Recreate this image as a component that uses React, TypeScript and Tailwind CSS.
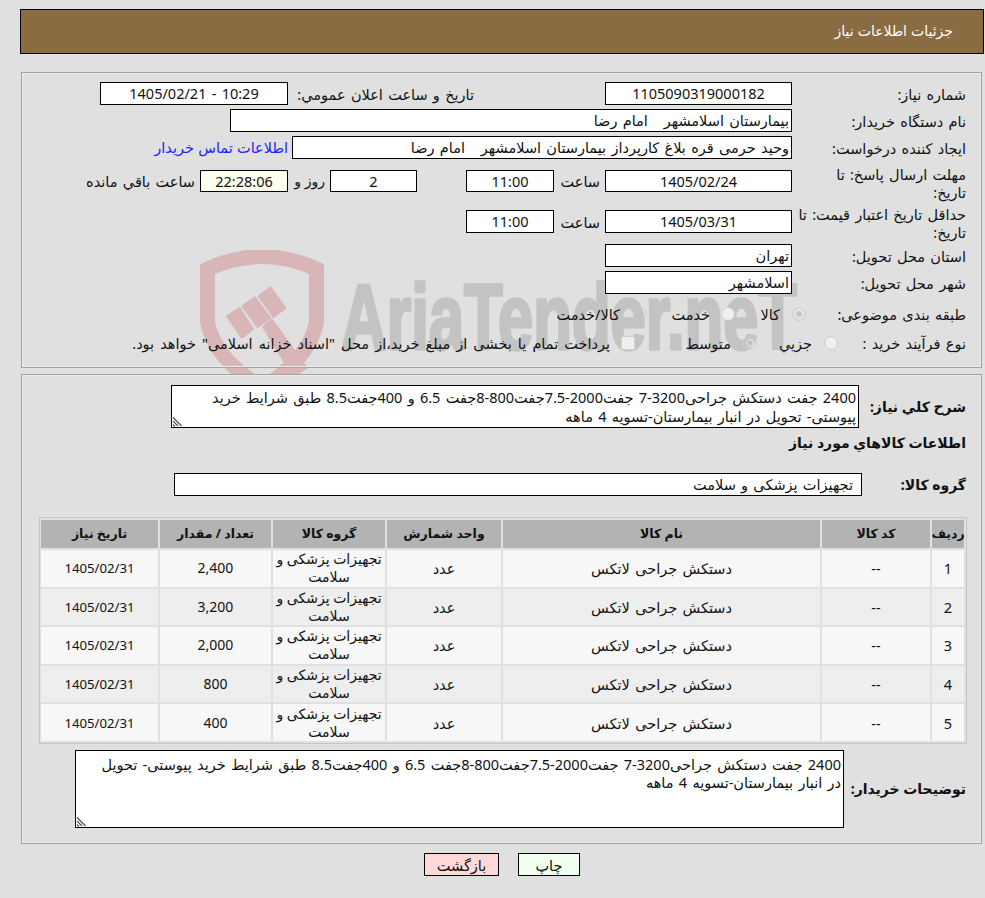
const field = "border border-black bg-white h-[23px] leading-[21px] whitespace-pre shrink-0";
const centered = `${field} text-center`;
const side = `${field} text-right pr-[2px]`;
const boldLabel = "font-bold text-[14px] [word-spacing:0] whitespace-nowrap";

const rows = [
  ["1", "2,400"],
  ["2", "3,200"],
  ["3", "2,000"],
  ["4", "800"],
  ["5", "400"],
];

function Radio({ checked, filled }: { checked?: boolean; filled?: boolean }) {
  return (
    <span className={`flex w-[14px] h-[14px] shrink-0 rounded-full border border-[#cdcdcd] items-center justify-center ${filled ? "bg-[#efefef]" : "bg-transparent"}`}>
      {checked && <span className="w-[8px] h-[8px] rounded-full bg-[#c4c4c4] border border-[#eee]" />}
    </span>
  );
}

function Grip() {
  return (
    <svg className="absolute left-0 bottom-0" width="11" height="11" viewBox="0 0 11 11">
      <path d="M1 1.5l8.5 8.5M1 5l5 5M1 8.5l2 2" stroke="#555" strokeWidth="1.2" fill="none" />
    </svg>
  );
}

function Watermark() {
  return (
    <svg className="absolute left-[200px] top-[250px] [direction:ltr]" width="600" height="126" viewBox="0 0 600 126">
      <path d="M7.5 19Q62 -6 116.5 19V72Q110 108 62 138Q14 108 7.5 72Z" fill="none" stroke="#d8b6b8" strokeWidth="15" />
      <path d="M25.700 66L40 56.700 54.300 79.300 41.700 89.300ZM41 56L55 46 71.700 68.300 57.300 78.300ZM57.300 46L70.700 36 86.700 58.300 73.300 68.300Z" fill="#d8b6b8" />
      <path d="M62 77L72 68 108 118 96 126H92Z" fill="#d8b6b8" />
      <text x="141" y="99" className="[direction:ltr] [word-spacing:0]" fontFamily="'Liberation Sans', sans-serif" fontWeight="700" fontSize="92" fill="#c3c3c3" stroke="#c3c3c3" strokeWidth="3.5" strokeLinejoin="round" textLength="456" lengthAdjust="spacingAndGlyphs">AriaTender.neT</text>
    </svg>
  );
}

export default function App() {
  return (
    <div dir="rtl" className="relative min-h-[898px] bg-[#e0e0e0] text-[#111] text-[14.5px] [word-spacing:1.5px] leading-[18px] pl-[20px] pt-[9px] font-['Noto_Sans','DejaVu_Sans',sans-serif]">
      <Watermark />

      <div className="relative h-[45px] mr-[1px] bg-[#8b6c42] border border-black text-white text-[14px] [word-spacing:0.5px] flex items-center pr-[30px] pb-[1px]">جزئیات اطلاعات نیاز</div>

      <section className="relative mt-[18px] mr-[3px] ml-[1px] h-[296px] border border-[#a3a3a3] shadow-[inset_0_0_0_1px_#ececec] pt-[9px] pr-[15px]">
        <div className="flex h-[23px]">
          <div className="w-[174px] pt-[3px]">شماره نیاز:</div>
          <div className={`${centered} w-[187px]`} dir="ltr">1105090319000182</div>
          <div className="w-[317px] pr-[131px] pt-[3px] whitespace-nowrap">تاریخ و ساعت اعلان عمومي:</div>
          <div className={`${centered} w-[188px]`} dir="ltr">1405/02/21 - 10:29</div>
        </div>

        <div className="flex h-[23px] mt-[4px]">
          <div className="w-[174px] pt-[3px]">نام دستگاه خریدار:</div>
          <div className={`${side} w-[562px]`}>{"بیمارستان اسلامشهر   امام رضا"}</div>
        </div>

        <div className="flex h-[23px] mt-[4px]">
          <div className="w-[174px] pt-[3px]">ایجاد کننده درخواست:</div>
          <div className={`${side} w-[500px]`}>{"وحید حرمی قره بلاغ کارپرداز بیمارستان اسلامشهر   امام رضا"}</div>
          <a className="mr-[4px] pt-[2px] text-[#2222ff] [word-spacing:0.5px] whitespace-nowrap">اطلاعات تماس خریدار</a>
        </div>

        <div className="flex h-[36px] mt-[6px]">
          <div className="w-[174px] whitespace-nowrap">مهلت ارسال پاسخ: تا<br />تاریخ:</div>
          <div className={`${centered} w-[187px] mt-[5px] !h-[22px]`} dir="ltr">1405/02/24</div>
          <div className="w-[51px] pr-[5px] mt-[7px]">ساعت</div>
          <div className={`${centered} w-[88px] mt-[5px] !h-[22px]`} dir="ltr">11:00</div>
          <div className="w-[49px]" />
          <div className={`${centered} w-[87px] mt-[5px] !h-[22px]`} dir="ltr">2</div>
          <div className="w-[42px] pr-[5px] mt-[7px] text-[14px] [word-spacing:0] whitespace-nowrap">روز و</div>
          <div className={`${centered} w-[88px] mt-[5px] !h-[22px] !bg-[#fffff0]`} dir="ltr">22:28:06</div>
          <div className="pr-[5px] mt-[7px] whitespace-nowrap">ساعت باقي مانده</div>
        </div>

        <div className="flex h-[36px] mt-[4px]">
          <div className="w-[174px] whitespace-nowrap">حداقل تاریخ اعتبار قیمت: تا<br />تاریخ:</div>
          <div className={`${centered} w-[187px] mt-[5px]`} dir="ltr">1405/03/31</div>
          <div className="w-[51px] pr-[5px] mt-[8px]">ساعت</div>
          <div className={`${centered} w-[88px] mt-[5px]`} dir="ltr">11:00</div>
        </div>

        <div className="flex h-[23px] mt-[3px]">
          <div className="w-[174px] pt-[3px]">استان محل تحویل:</div>
          <div className={`${side} w-[187px]`}>تهران</div>
        </div>

        <div className="flex h-[23px] mt-[4px]">
          <div className="w-[174px] pt-[3px]">شهر محل تحویل:</div>
          <div className={`${side} w-[187px]`}>اسلامشهر</div>
        </div>

        <div className="flex items-center h-[18px] mt-[11px]">
          <div className="w-[160px]">طبقه بندی موضوعی:</div>
          <div className="flex items-center gap-[12px] w-[71px]"><Radio checked /><span>کالا</span></div>
          <div className="flex items-center gap-[11px] w-[88px]"><Radio filled /><span>خدمت</span></div>
          <div className="flex items-center gap-[13px]"><Radio /><span>کالا/خدمت</span></div>
        </div>

        <div className="flex items-center h-[18px] mt-[11px]">
          <div className="w-[128px]">نوع فرآیند خرید :</div>
          <div className="flex items-center gap-[12px] w-[81px]"><Radio filled /><span>جزيي</span></div>
          <div className="flex items-center gap-[12px] w-[122px]"><Radio checked /><span>متوسط</span></div>
          <div className="flex items-center gap-[11px] whitespace-nowrap">
            <span className="w-[14px] h-[14px] rounded-[2px] border border-[#d0d0d0] bg-[#efefef] shrink-0" />
            <span className="[word-spacing:2.3px]">پرداخت تمام یا بخشی از مبلغ خرید،از محل "اسناد خزانه اسلامی" خواهد بود.</span>
          </div>
        </div>
      </section>

      <section className="relative mt-[6px] mr-[3px] ml-[1px] h-[470px] bg-[#e0e0e0] border border-[#a3a3a3] shadow-[inset_0_0_0_1px_#ececec] pt-[10px] pr-[15px]">
        <div className="flex items-center h-[43px]">
          <div className={`w-[107px] ${boldLabel}`}>شرح کلي نیاز:</div>
          <div className="relative w-[688px] h-[43px] border border-black bg-white pr-[2px] pt-[2px] leading-[19px] whitespace-nowrap">
            2400 جفت دستکش جراحی3200-7 جفت2000-7.5جفت800-8جفت 6.5 و 400جفت8.5 طبق شرایط خرید<br />
            پیوستی- تحویل در انبار بیمارستان-تسویه 4 ماهه
            <Grip />
          </div>
        </div>

        <div className={`${boldLabel} mt-[6px] h-[18px]`}>اطلاعات کالاهاي مورد نیاز</div>

        <div className="flex items-center h-[23px] mt-[21px]">
          <div className={`w-[104px] ${boldLabel}`}>گروه کالا:</div>
          <div className={`${field} w-[688px] text-right pr-[8px]`}>تجهیزات پزشکی و سلامت</div>
        </div>

        <div className="mt-[21px] w-[928px] -mr-[1px] border border-[#c4c4c4] p-[2px]">
          <div className="grid grid-cols-[32px_108px_317px_114px_112px_111px_117px] grid-rows-[28px_repeat(5,36.6px)] gap-[2px] text-center">
            {["ردیف", "کد کالا", "نام کالا", "واحد شمارش", "گروه کالا", "تعداد / مقدار", "تاریخ نیاز"].map((h) => (
              <div key={h} className="bg-[#b3b3b3] font-bold text-[12.5px] [word-spacing:0] flex items-center justify-center whitespace-nowrap">{h}</div>
            ))}
            {rows.map(([n, qty], i) => {
              const bg = i % 2 === 0 ? "bg-[#f7f7f7]" : "bg-[#eeeeee]";
              const cell = `${bg} flex items-center justify-center`;
              return [
                <div key={`${n}a`} className={cell}>{n}</div>,
                <div key={`${n}b`} className={cell}>--</div>,
                <div key={`${n}c`} className={cell}>دستکش جراحی لاتکس</div>,
                <div key={`${n}d`} className={cell}>عدد</div>,
                <div key={`${n}e`} className={`${cell} text-[14px] [word-spacing:0]`}>تجهیزات پزشکی و سلامت</div>,
                <div key={`${n}f`} className={`${cell} text-[14px]`} dir="ltr">{qty}</div>,
                <div key={`${n}g`} className={`${cell} text-[13.2px]`} dir="ltr">1405/02/31</div>,
              ];
            })}
          </div>
        </div>

        <div className="flex items-center h-[78px] mt-[6px]">
          <div className={`w-[122px] ${boldLabel}`}>توضیحات خریدار:</div>
          <div className="relative w-[769px] h-[78px] border border-black bg-white pr-[2px] pt-[4px] whitespace-nowrap">
            2400 جفت دستکش جراحی3200-7 جفت2000-7.5جفت800-8جفت 6.5 و 400جفت8.5 طبق شرایط خرید پیوستی- تحویل<br />
            در انبار بیمارستان-تسویه 4 ماهه
            <Grip />
          </div>
        </div>
      </section>

      <div className="flex gap-[19px] mt-[9px] pr-[405px]">
        <button className="w-[62px] h-[23px] border border-black bg-[#f0fff0] text-center">چاپ</button>
        <button className="w-[75px] h-[23px] border border-black bg-[#ffd9d9] text-center">بازگشت</button>
      </div>
    </div>
  );
}
